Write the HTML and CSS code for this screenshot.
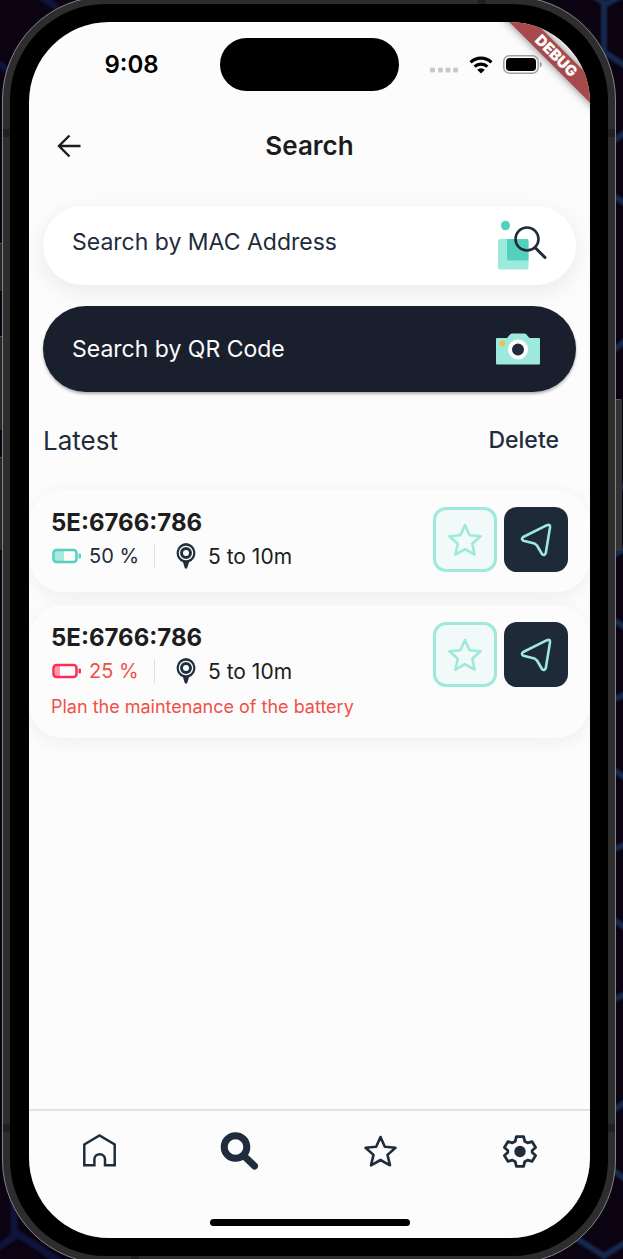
FILE: index.html
```html
<!DOCTYPE html>
<html lang="en">
<head>
<meta charset="utf-8">
<meta name="viewport" content="width=device-width, initial-scale=1">
<title>Search</title>
<link rel="stylesheet" href="styles.css">
</head>
<body>
<svg class="wallpaper" viewBox="0 0 623 1259" preserveAspectRatio="none" aria-hidden="true">
  <g class="mesh-left" fill="none" stroke="#10143c" stroke-width="7">
    <path d="M-5 62L12 72L50 48M40-4L58 8"/>
    <path d="M-5 1250L18 1234L60 1262M14 1170V1234"/>
  </g>
  <g class="mesh-right" fill="none" stroke="#16294d" stroke-width="6">
    <path d="M590-6L606 4L625-6M604 4V52L626 66M612 142L626 132"/>
    <path d="M614 196L626 204M626 340L614 350M614 482L626 490M612 556L626 548M614 620L626 628M612 700L626 694M614 770L626 778M612 850L626 844M614 920L626 928M612 1000L626 994"/>
    <path d="M610 1112L626 1102M608 1166L626 1180M576 1238L604 1256L626 1242"/>
  </g>
</svg>
<div class="phone">
  <span class="key key-action"></span>
  <span class="key key-up"></span>
  <span class="key key-down"></span>
  <span class="key key-power"></span>
  <span class="band band-tl"></span>
  <span class="band band-tr"></span>
  <span class="band band-bl"></span>
  <span class="band band-br"></span>
  <span class="band band-top"></span>
  <span class="band band-bottom"></span>
  <div class="bezel">
    <div class="screen">
      <div class="ribbon">DEBUG</div>
      <div class="status">
        <time class="clock">9:08</time>
        <span class="island"></span>
        <div class="indicators">
          <svg width="29" height="6" viewBox="0 0 29 6" aria-hidden="true"><g fill="#c8c8c8"><rect width="5" height="5" y=".5" rx="1.5"/><rect x="8" width="5" height="5" y=".5" rx="1.5"/><rect x="15.500" width="5" height="5" y=".5" rx="1.5"/><rect x="23" width="5" height="5" y=".5" rx="1.5"/></g></svg>
          <svg class="wifi" width="24" height="18" viewBox="0 0 24 18" aria-hidden="true"><g fill="none" stroke="#000" stroke-width="3.200"><path d="M1.600 6.400A15 15 0 0 1 22.400 6.400"/><path d="M5.600 10.700A9.200 9.200 0 0 1 18.400 10.700"/></g><path d="M12 17.600L8.200 13.700A5.400 5.400 0 0 1 15.800 13.700Z"/></svg>
          <svg width="39" height="19" viewBox="0 0 39 19" aria-hidden="true"><rect x=".8" y=".8" width="34.400" height="17.400" rx="5.500" fill="#fff" stroke="#a0a0a0" stroke-width="1.500"/><rect x="3" y="3" width="30" height="13" rx="3.800"/><path d="M36.800 6.500Q39 7.300 39 9.500T36.800 12.500Z" fill="#a0a0a0"/></svg>
        </div>
      </div>
      <header class="appbar">
        <button class="back" type="button" aria-label="Back"><svg width="24" height="24" viewBox="0 0 24 24" fill="none" stroke="#1d1d20" stroke-width="2.400" aria-hidden="true"><path d="M12.500 1.500L2 12L12.500 22.500M2 12H23.500"/></svg></button>
        <h1>Search</h1>
      </header>
      <main>
        <div class="options">
          <button class="option option-mac" type="button">
            <span>Search by MAC Address</span>
            <svg width="50" height="50" viewBox="0 0 50 50" aria-hidden="true"><ellipse cx="8.500" cy="5.500" rx="4.500" ry="4.800" fill="#53d1bd"/><rect x="1" y="19" width="30.500" height="30.500" rx="2" fill="#9de9dc"/><path d="M10 19H29.500Q31.500 19 31.500 21V40.500H12Q10 40.500 10 38.500Z" fill="#53d1bd"/><g fill="none" stroke="#1f2c3b"><circle cx="30" cy="19" r="11.500" stroke-width="2.600"/><path d="M38 27.500L48 37.500" stroke-width="3" stroke-linecap="round"/></g></svg>
          </button>
          <button class="option option-qr" type="button">
            <span>Search by QR Code</span>
            <svg width="44" height="32" viewBox="0 0 44 32" aria-hidden="true"><path d="M1 5H11L14.500 1Q15 .5 16 .5H28.500Q29.500 .5 30 1L33.500 5H43Q44 5 44 6V30.500Q44 31.500 43 31.500H1Q0 31.500 0 30.500V6Q0 5 1 5Z" fill="#9de9dc"/><circle cx="6.300" cy="10.500" r="2.800" fill="#f7bd38"/><circle cx="22" cy="16.500" r="8" fill="#1f2c3b" stroke="#fff" stroke-width="4"/></svg>
          </button>
        </div>
        <div class="latest">
          <h2>Latest</h2>
          <button class="delete" type="button">Delete</button>
        </div>
        <ul class="devices">
          <li class="device">
            <div class="info">
              <h3>5E:6766:786</h3>
              <div class="stats">
                <svg width="30" height="16" viewBox="0 0 30 16" aria-hidden="true"><path d="M3 3H12V13H3Z" fill="#a9e8de"/><rect x="1.500" y="2" width="23" height="12" rx="3" fill="none" stroke="#53d1bd" stroke-width="2.500"/><rect x="26.500" y="5.500" width="2.500" height="5" rx="1" fill="#53d1bd"/></svg>
                <span class="level">50 %</span>
                <span class="rule"></span>
                <svg width="20" height="26" viewBox="0 0 20 26" aria-hidden="true"><path d="M10 0A10 10 0 0 1 13 19.300L11.400 24.500Q10 27 8.600 24.500L7 19.300A10 10 0 0 1 10 0Z" fill="#1f2f3d"/><circle cx="10" cy="10" r="6.600" fill="none" stroke="#fcfcfc" stroke-width="1.300"/><circle cx="10" cy="10" r="3" fill="#fcfcfc"/></svg>
                <span class="range">5 to 10m</span>
              </div>
            </div>
            <div class="actions">
              <button class="fav" type="button" aria-label="Add to favourites"><svg width="34" height="34" viewBox="0 0 34 34" fill="none" stroke="#9de9dc" stroke-width="2.600" stroke-linejoin="round" aria-hidden="true"><path d="M17 2L21.600 12.300L32.500 13.300L24.300 20.800L26.600 31.700L17 26.200L7.400 31.700L9.700 20.800L1.500 13.300L12.400 12.300Z"/></svg></button>
              <button class="locate" type="button" aria-label="Locate"><svg width="34" height="34" viewBox="0 0 34 34" fill="none" stroke="#9de9dc" stroke-width="2.600" stroke-linejoin="round" aria-hidden="true"><path d="M28 2.200Q31.400 1 31 4.400L26.800 30Q25.500 33.300 23 31L18 22.500L15.500 20.500L4.500 17.800Q1.500 16 4.200 14Z"/></svg></button>
            </div>
          </li>
          <li class="device">
            <div class="info">
              <h3>5E:6766:786</h3>
              <div class="stats low">
                <svg width="30" height="16" viewBox="0 0 30 16" aria-hidden="true"><path d="M3 3H8V13H3Z" fill="#fb9aad"/><rect x="1.500" y="2" width="23" height="12" rx="3" fill="none" stroke="#f92e55" stroke-width="2.500"/><rect x="26.500" y="5.500" width="2.500" height="5" rx="1" fill="#f92e55"/></svg>
                <span class="level">25 %</span>
                <span class="rule"></span>
                <svg width="20" height="26" viewBox="0 0 20 26" aria-hidden="true"><path d="M10 0A10 10 0 0 1 13 19.300L11.400 24.500Q10 27 8.600 24.500L7 19.300A10 10 0 0 1 10 0Z" fill="#1f2f3d"/><circle cx="10" cy="10" r="6.600" fill="none" stroke="#fcfcfc" stroke-width="1.300"/><circle cx="10" cy="10" r="3" fill="#fcfcfc"/></svg>
                <span class="range">5 to 10m</span>
              </div>
              <p class="warning">Plan the maintenance of the battery</p>
            </div>
            <div class="actions">
              <button class="fav" type="button" aria-label="Add to favourites"><svg width="34" height="34" viewBox="0 0 34 34" fill="none" stroke="#9de9dc" stroke-width="2.600" stroke-linejoin="round" aria-hidden="true"><path d="M17 2L21.600 12.300L32.500 13.300L24.300 20.800L26.600 31.700L17 26.200L7.400 31.700L9.700 20.800L1.500 13.300L12.400 12.300Z"/></svg></button>
              <button class="locate" type="button" aria-label="Locate"><svg width="34" height="34" viewBox="0 0 34 34" fill="none" stroke="#9de9dc" stroke-width="2.600" stroke-linejoin="round" aria-hidden="true"><path d="M28 2.200Q31.400 1 31 4.400L26.800 30Q25.500 33.300 23 31L18 22.500L15.500 20.500L4.500 17.800Q1.500 16 4.200 14Z"/></svg></button>
            </div>
          </li>
        </ul>
      </main>
      <nav class="tabs" aria-label="Main">
        <a href="#home" aria-label="Home"><svg width="38" height="38" viewBox="0 0 38 38" fill="none" stroke="#1f2c3b" stroke-width="2.500" aria-hidden="true"><path d="M4.300 12.500L19.500 3.500L34.700 12.500V33.300H25V27.500A5.300 5.300 0 0 0 14.400 27.500V33.300H4.300Z"/></svg></a>
        <a href="#search" aria-label="Search" aria-current="page"><svg width="38" height="38" viewBox="0 0 38 38" fill="none" stroke="#1f2c3b" aria-hidden="true"><circle cx="15.500" cy="15" r="11.300" stroke-width="7"/><path d="M24 24L34.500 34" stroke-width="7" stroke-linecap="round"/></svg></a>
        <a href="#favourites" aria-label="Favourites"><svg width="38" height="38" viewBox="0 0 38 38" fill="none" stroke="#1f2c3b" stroke-width="2.600" stroke-linejoin="round" aria-hidden="true"><path d="M19.500 5L23.800 14.800L34.500 15.800L26.500 22.900L29 33.300L19.500 28L10 33.300L12.500 22.900L4.500 15.800L15.200 14.800Z"/></svg></a>
        <a href="#settings" aria-label="Settings"><svg width="38" height="38" viewBox="0 0 38 38" aria-hidden="true"><path fill="none" stroke="#1f2c3b" stroke-width="2.800" stroke-linejoin="round" d="M15.400 4.700H22.600L23.700 9.200L26.600 10.900L31.100 9.600L34.600 15.500L31.200 18.500V20.500L34.600 23.500L31.100 29.400L26.600 28.100L23.700 29.800L22.600 34.300H15.400L14.300 29.800L11.400 28.100L6.900 29.400L3.400 23.500L6.800 20.500V18.500L3.400 15.500L6.900 9.600L11.400 10.900L14.300 9.200Z"/><circle cx="19" cy="19.500" r="5.700" fill="#1f2c3b"/></svg></a>
      </nav>
      <span class="home-bar"></span>
    </div>
  </div>
</div>
</body>
</html>
```
FILE: styles.css
```css
* { box-sizing: border-box; }

body {
  margin: 0;
  height: 100vh;
  position: relative;
  overflow: hidden;
  background: #0b0312;
  color: #1f2c3b;
  font-family: Inter, "Liberation Sans", sans-serif;
}

svg { display: block; flex: none; }
button { border: 0; padding: 0; background: none; color: inherit; font: inherit; text-align: left; }
h1, h2, h3, p, ul { margin: 0; padding: 0; }

.wallpaper {
  position: absolute;
  inset: 0;
  width: 100%;
  height: 100%;
}
.mesh-left, .mesh-right { filter: blur(1px); }

/* Device frame */
.phone {
  position: relative;
  height: calc(100vh + 9px);
  margin: -4px 7px 0 2px;
  padding: 7px;
  border: 1px solid #858585;
  border-radius: 104px;
  background: #2d2d2d;
}
.bezel {
  height: 100%;
  padding: 18px 18px 18px 19px;
  border-radius: 96px;
  background: #000;
}
.screen {
  position: relative;
  display: flex;
  flex-direction: column;
  height: 100%;
  overflow: hidden;
  border-radius: 80px;
  background: #fcfcfc;
}
.key { position: absolute; left: -4px; width: 3px; background: #29242c; border-top: 1px solid #555; }
.key-action { top: 246px; height: 48px; }
.key-up { top: 339px; height: 94px; }
.key-down { top: 460px; height: 93px; }
.key-power { left: auto; right: -7px; top: 402px; width: 6px; height: 152px; background: #323232; border-radius: 0 2px 2px 0; }
.band { position: absolute; width: 7px; height: 8px; background: #202020; }
.band-tl { left: 0; top: 132px; }
.band-tr { right: 0; top: 132px; }
.band-bl { left: 0; bottom: 131px; }
.band-br { right: 0; bottom: 131px; }
.band-top { top: 0; right: 129px; width: 8px; height: 7px; }
.band-bottom { bottom: 0; left: 128px; width: 8px; height: 7px; }

.ribbon {
  position: absolute;
  z-index: 1;
  top: 25px;
  right: -36px;
  width: 140px;
  transform: rotate(45deg);
  background: #a84a4b;
  box-shadow: 0 0 10px rgba(0, 0, 0, .5);
  color: #fff;
  font-size: 15px;
  font-weight: 900;
  line-height: 18px;
  text-align: center;
}

/* Status bar */
.status {
  display: grid;
  grid-template-columns: 1fr auto 1fr;
  align-items: center;
  padding-top: 16px;
}
.clock {
  padding-left: 14px;
  color: #000;
  font-size: 24px;
  font-weight: 600;
  line-height: 30px;
  text-align: center;
}
.island { width: 179px; height: 53px; border-radius: 27px; background: #000; }
.indicators { display: flex; align-items: center; gap: 10px; padding-left: 31px; }
.indicators svg:first-child { margin-top: 10px; }

/* App bar */
.appbar {
  display: grid;
  grid-template-columns: 24px 1fr 24px;
  align-items: center;
  margin-top: 35px;
  padding: 0 28px;
}
h1 {
  color: #1d1d20;
  font-size: 26px;
  font-weight: 600;
  line-height: 40px;
  text-align: center;
}

main { flex: 1; padding-top: 40px; }
.options { display: grid; gap: 21px; padding: 0 14px; }
.option {
  display: flex;
  align-items: center;
  justify-content: space-between;
  padding: 0 29px;
  border-radius: 43px;
  font-size: 23px;
}
.option-mac {
  height: 79px;
  padding-bottom: 2px;
  background: #fff;
  box-shadow: 0 6px 24px rgba(0, 0, 0, .08);
}
.option-mac span { padding-bottom: 6px; }
.option-qr {
  height: 86px;
  padding-right: 36px;
  background: #1a1f2e;
  box-shadow: 0 2px 3px rgba(0, 0, 0, .3);
  color: #fcfcfc;
}

.latest {
  display: flex;
  align-items: center;
  justify-content: space-between;
  padding: 33px 31px 34px 14px;
  line-height: 31px;
}
h2 { font-size: 26px; font-weight: 400; }
.delete { font-size: 23px; font-weight: 500; }

.devices { display: grid; gap: 13px; list-style: none; }
.device {
  display: flex;
  align-items: flex-start;
  justify-content: space-between;
  padding: 17px 22px 19px 22px;
  border-radius: 34px;
  background: #fcfcfc;
  box-shadow: 0 4px 20px rgba(0, 0, 0, .06);
}
h3 { color: #1d1d20; font-size: 24px; font-weight: 700; line-height: 32px; }
.stats { display: flex; align-items: center; height: 34px; font-size: 21px; }
.level { width: 64px; padding-left: 7px; font-size: 20px; white-space: nowrap; }
.stats svg:first-child { margin-left: 1px; }
.rule { width: 1px; height: 24px; margin: 0 21px 0 8px; background: #dfdfdf; }
.range { padding-left: 12px; color: #1d1d20; }
.low .level, .warning { color: #f05047; }
.warning { padding-top: 6px; font-size: 18px; line-height: 25px; }
.actions { display: flex; gap: 7px; }
.fav, .locate {
  display: grid;
  place-items: center;
  width: 64px;
  height: 65px;
  border-radius: 13px;
}
.fav { border: 3px solid #9de9dc; background: #f1faf9; }
.locate { background: #1f2a39; }

/* Bottom navigation */
.tabs {
  display: grid;
  grid-template-columns: repeat(4, 1fr);
  height: 110px;
  padding-top: 21px;
  border-top: 2px solid #e2e2e2;
}
.tabs a { display: flex; justify-content: center; }
.home-bar {
  align-self: center;
  width: 200px;
  height: 7px;
  margin-bottom: 12px;
  border-radius: 4px;
  background: #000;
}
```
